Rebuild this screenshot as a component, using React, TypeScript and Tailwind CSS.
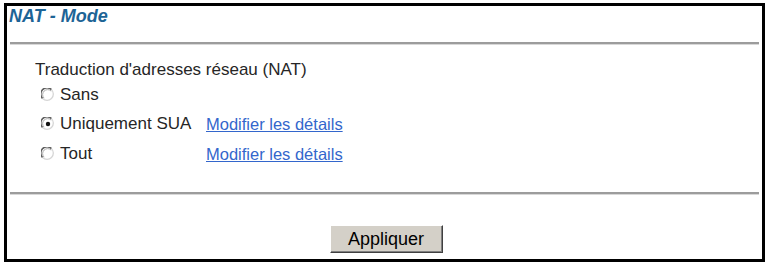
import React from "react";

function Radio({ checked }: { checked?: boolean }) {
  return (
    <svg width="14" height="14" viewBox="0 0 14 14" className="shrink-0 -ml-[1px]">
      <circle cx="7" cy="7" r="6.2" fill="#ffffff" />
      <path d="M1.6 10.5 A6.2 6.2 0 0 1 10.5 1.6" stroke="#5f5f5f" strokeWidth="1.5" fill="none" />
      <path d="M3.1 10.2 A4.7 4.7 0 0 1 10.2 3.1" stroke="#a8a8a8" strokeWidth="1" fill="none" />
      <path d="M10.5 1.6 A6.2 6.2 0 0 1 1.6 10.5" stroke="#d6d6d6" strokeWidth="1.3" fill="none" />
      {checked && <circle cx="7" cy="7" r="2.2" fill="#111" />}
    </svg>
  );
}

function Hr() {
  return <div className="mx-[3px] h-[3px] border-t-2 border-[#9c9c9c] border-b border-b-[#d8d8d8]" />;
}

export default function App() {
  const font = { fontFamily: '"Liberation Sans", Arial, sans-serif' };
  return (
    <div className="w-[767px] h-[262px] bg-white pt-[3px] pl-[4px]" style={font}>
      <div className="w-[761px] h-[259px] border-[3px] border-black flex flex-col">
        <div className="h-[36px] pl-[2px] text-[18px] leading-[21px] font-bold italic text-[#1d6496]">
          NAT - Mode
        </div>
        <Hr />
        <div className="pl-[28px] pt-[15px] text-[17px] text-[#262626]">
          <div className="h-[20px] leading-[20px]">Traduction d'adresses réseau (NAT)</div>
          <div className="pl-[7px] mt-[5px] flex flex-col gap-[9px]">
            <div className="h-[20px] flex items-center">
              <Radio />
              <span className="ml-[5px] leading-[20px]">Sans</span>
            </div>
            <div className="h-[20px] flex items-center">
              <Radio checked />
              <span className="ml-[5px] w-[146px] leading-[20px]">Uniquement SUA</span>
              <a className="text-[#3366cc] underline leading-[20px] text-[16.5px]">Modifier les détails</a>
            </div>
            <div className="h-[20px] flex items-center mt-[1px]">
              <Radio />
              <span className="ml-[5px] w-[146px] leading-[20px]">Tout</span>
              <a className="text-[#3366cc] underline leading-[20px] text-[16.5px]">Modifier les détails</a>
            </div>
          </div>
        </div>
        <div className="mt-[28px]">
          <Hr />
        </div>
        <div className="flex justify-center pt-[30px] pl-[3px]">
          <button className="w-[113px] h-[28px] bg-[#d4d0c8] border border-t-white border-l-white border-r-[#404040] border-b-[#404040] shadow-[inset_-1px_-1px_0_#808080] text-[18px] text-black leading-[20px]">
            Appliquer
          </button>
        </div>
      </div>
    </div>
  );
}
